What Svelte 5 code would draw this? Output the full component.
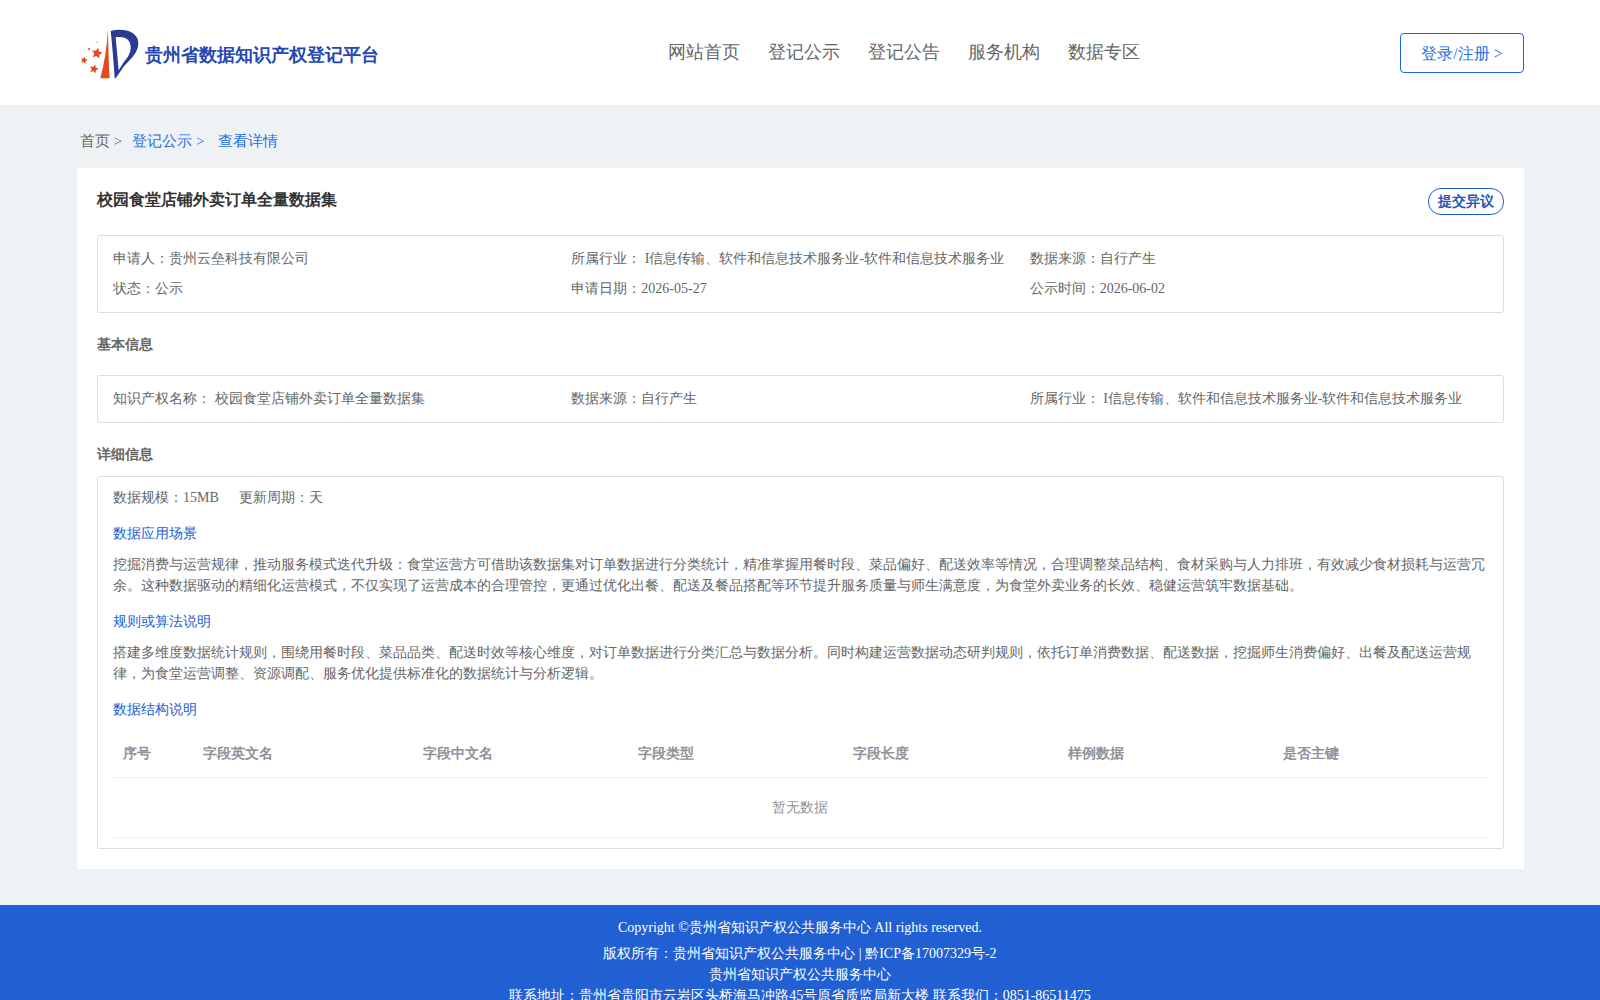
<script>
  const fields = ['字段英文名', '字段中文名', '字段类型', '字段长度', '样例数据', '是否主键'];
  const nav = ['网站首页', '登记公示', '登记公告', '服务机构', '数据专区'];
  const star = (cx, cy, r, rot = 0) => {
    const pts = [];
    for (let i = 0; i < 10; i++) {
      const a = ((-90 + rot + i * 36) * Math.PI) / 180;
      const d = i % 2 ? r * 0.48 : r;
      pts.push(`${(cx + d * Math.cos(a)).toFixed(1)},${(cy + d * Math.sin(a)).toFixed(1)}`);
    }
    return pts.join(' ');
  };
</script>

<header class="header">
  <div class="brand">
    <svg class="logo" viewBox="0 0 207 180" width="69" height="60" aria-hidden="true">
      <path d="M99 18 C100 70 101 120 104 166 L76 166 C89 118 96 70 99 18 Z" fill="#e2491f"/>
      <path d="M107 24 C145 14 190 26 190 60 C190 88 168 108 148 128 L122 166 L119 166 C116 118 112 70 107 24 Z M122 43 L131 142 L146 118 C158 104 168 90 167 70 C165 46 146 39 122 43 Z" fill="#2b3a93" fill-rule="evenodd"/>
      <polygon points={star(66, 91, 17, 12)} fill="#e2491f"/>
      <polygon points={star(27, 112, 11, 10)} fill="#e2491f"/>
      <polygon points={star(57, 138, 14, 15)} fill="#e2491f"/>
      <circle cx="42" cy="78" r="3.5" fill="#e8693f"/>
      <circle cx="66" cy="57" r="2.5" fill="#f09a7a"/>
    </svg>
    <span class="title">贵州省数据知识产权登记平台</span>
  </div>
  <nav class="nav">
    {#each nav as item}<span>{item}</span>{/each}
  </nav>
  <button class="login">登录/注册 &gt;</button>
</header>

<main class="main">
  <div class="crumbs">
    <span class="home">首页 &gt;</span>
    <span class="link first">登记公示 &gt;</span>
    <span class="link">查看详情</span>
  </div>

  <section class="card">
    <div class="head">
      <h1>校园食堂店铺外卖订单全量数据集</h1>
      <button class="objection">提交异议</button>
    </div>

    <div class="box summary">
      <div>申请人：贵州云垒科技有限公司</div>
      <div>所属行业： I信息传输、软件和信息技术服务业-软件和信息技术服务业</div>
      <div>数据来源：自行产生</div>
      <div>状态：公示</div>
      <div>申请日期：2026-05-27</div>
      <div>公示时间：2026-06-02</div>
    </div>

    <h2 class="basic-title">基本信息</h2>
    <div class="box basic">
      <div>知识产权名称： 校园食堂店铺外卖订单全量数据集</div>
      <div>数据来源：自行产生</div>
      <div>所属行业： I信息传输、软件和信息技术服务业-软件和信息技术服务业</div>
    </div>

    <h2 class="detail-title">详细信息</h2>
    <div class="box detail">
      <div class="meta"><span>数据规模：15MB</span><span>更新周期：天</span></div>
      <h3>数据应用场景</h3>
      <p>挖掘消费与运营规律，推动服务模式迭代升级：食堂运营方可借助该数据集对订单数据进行分类统计，精准掌握用餐时段、菜品偏好、配送效率等情况，合理调整菜品结构、食材采购与人力排班，有效减少食材损耗与运营冗余。这种数据驱动的精细化运营模式，不仅实现了运营成本的合理管控，更通过优化出餐、配送及餐品搭配等环节提升服务质量与师生满意度，为食堂外卖业务的长效、稳健运营筑牢数据基础。</p>
      <h3>规则或算法说明</h3>
      <p>搭建多维度数据统计规则，围绕用餐时段、菜品品类、配送时效等核心维度，对订单数据进行分类汇总与数据分析。同时构建运营数据动态研判规则，依托订单消费数据、配送数据，挖掘师生消费偏好、出餐及配送运营规律，为食堂运营调整、资源调配、服务优化提供标准化的数据统计与分析逻辑。</p>
      <h3>数据结构说明</h3>
      <div class="table">
        <div class="row">
          <span>序号</span>
          {#each fields as f}<span>{f}</span>{/each}
        </div>
        <div class="empty">暂无数据</div>
      </div>
    </div>
  </section>
</main>

<footer class="footer">
  <div class="copy">Copyright ©贵州省知识产权公共服务中心 All rights reserved.</div>
  <div>版权所有：贵州省知识产权公共服务中心 | 黔ICP备17007329号-2</div>
  <div>贵州省知识产权公共服务中心</div>
  <div>联系地址：贵州省贵阳市云岩区头桥海马冲路45号原省质监局新大楼 联系我们：0851-86511475</div>
</footer>

<style>
  :global(html), :global(body) { margin: 0; height: 1000px; overflow: hidden; }
  :global(body) {
    background: #eff2f5;
    font-family: "Liberation Serif", serif;
    color: #666;
    font-size: 14px;
  }
  .header {
    height: 105px;
    background: #fff;
    display: flex;
    align-items: center;
    padding: 0 76px 0 75px;
  }
  .brand { display: flex; align-items: center; width: 593px; flex: none; }
  .logo { flex: none; }
  .title { font-size: 18px; font-weight: 700; color: #2447b2; margin-top: 5px; padding-left: 1px; white-space: nowrap; }
  .nav { display: flex; gap: 28px; font-size: 18px; color: #666; margin-top: -1px; }
  .login {
    margin-left: auto;
    width: 124px;
    height: 40px;
    border: 1px solid #1a66e0;
    border-radius: 4px;
    background: #fff;
    color: #1f6fe5;
    font: inherit;
    font-size: 16px;
    padding: 4px 0 0;
  }
  .main { padding: 0 76px 36px 77px; }
  .crumbs { height: 63px; display: flex; align-items: center; font-size: 15px; padding: 10px 3px 0; box-sizing: border-box; }
  .home { color: #666; margin-right: 10px; }
  .link { color: #1f6fe5; }
  .link.first { margin-right: 14px; }
  .card {
    background: #fff;
    padding: 20px;
    height: 701px;
    box-sizing: border-box;
  }
  .head { display: flex; justify-content: space-between; align-items: flex-start; height: 47px; }
  h1 { margin: 0; font-size: 16px; line-height: 24px; font-weight: 700; color: #333; }
  .objection {
    width: 76px;
    height: 27px;
    border: 1px solid #1a5fcf;
    border-radius: 13px;
    background: #fff;
    color: #1f56b8;
    font: inherit;
    font-weight: 700;
    font-size: 14px;
    padding: 1px 0 0;
  }
  .box {
    border: 1px solid #dcdfe2;
    border-radius: 3px;
    box-sizing: border-box;
    line-height: 20px;
  }
  .summary, .basic {
    display: grid;
    grid-template-columns: repeat(3, 1fr);
    padding: 0 15px;
    align-items: center;
  }
  .summary { height: 78px; align-content: center; row-gap: 10px; }
  .basic { height: 48px; }
  h2 { margin: 0; font-size: 14px; line-height: 20px; font-weight: 700; color: #666; }
  .basic-title { padding: 22px 0 20px; }
  .detail-title { padding: 22px 0 11px; }
  .detail { height: 373px; padding: 11px 15px 0; }
  .meta { display: flex; gap: 20px; }
  h3 { margin: 16px 0 10px; font-size: 14px; line-height: 20px; font-weight: 400; color: #2060d2; }
  p { margin: 0; line-height: 21px; }
  .table { margin-top: 5px; }
  .row {
    display: grid;
    grid-template-columns: 80px 220px repeat(5, 215px);
    height: 48px;
    align-items: center;
    border-bottom: 1px solid #ebeef5;
    font-weight: 700;
    color: #909399;
    box-sizing: border-box;
  }
  .row span { padding-left: 10px; }
  .empty {
    height: 60px;
    display: flex;
    align-items: center;
    justify-content: center;
    border-bottom: 1px solid #ebeef5;
    color: #909399;
    box-sizing: border-box;
    padding-right: 1px;
  }
  .footer {
    background: #2060d2;
    color: #fff;
    text-align: center;
    line-height: 21px;
    height: 95px;
    padding-top: 12px;
    box-sizing: border-box;
  }
  .copy { margin-bottom: 5px; }
</style>
